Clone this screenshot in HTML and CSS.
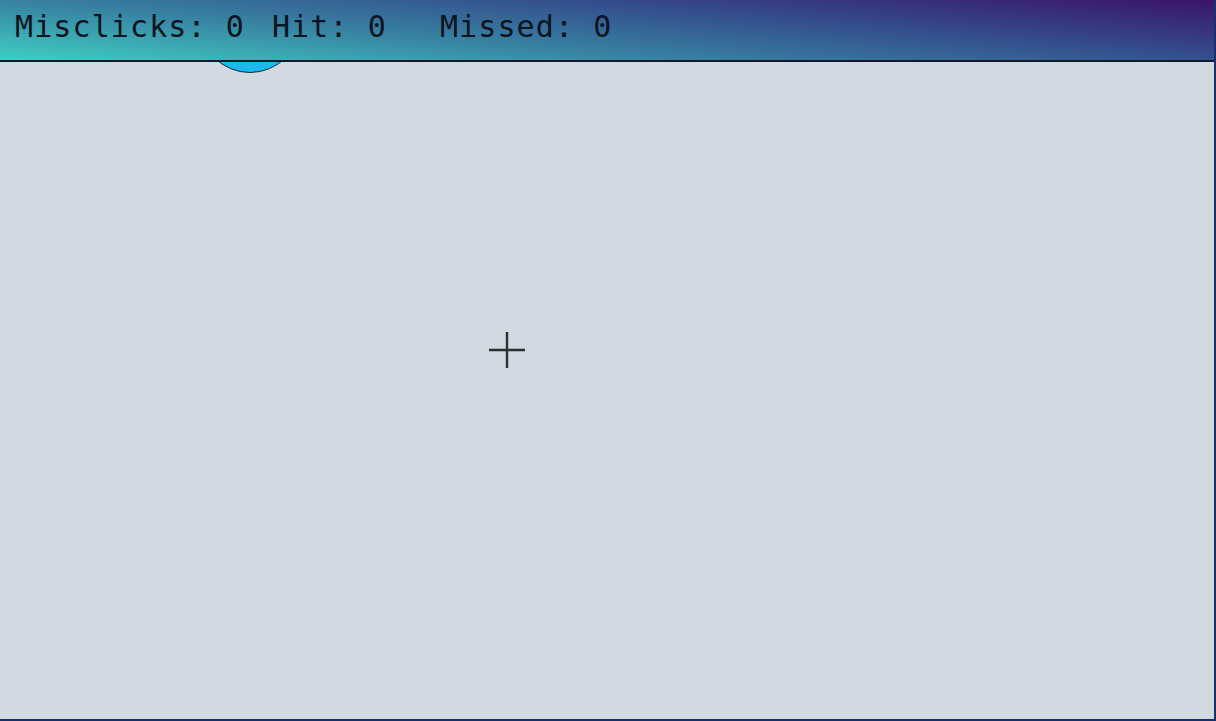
FILE: index.html
```html
<!DOCTYPE html>
<html lang="en">
<head>
<meta charset="utf-8">
<title>Aim Trainer</title>
<link rel="stylesheet" href="styles.css">
</head>
<body>
<div class="app">
  <header class="hud">
    <span class="stat">Misclicks: 0</span>
    <span class="stat stat-hit">Hit: 0</span>
    <span class="stat">Missed: 0</span>
  </header>
  <main class="field">
    <div class="target"></div>
    <svg class="crosshair" width="40" height="40" viewBox="0 0 40 40" aria-hidden="true">
      <path d="M2 20H38M20 2V38" stroke="#2a2e35" stroke-width="2.4" fill="none"/>
    </svg>
  </main>
</div>
</body>
</html>
```

FILE: styles.css
```css
html, body {
  margin: 0;
  padding: 0;
  height: 100%;
}

body {
  background: #d3d9e1;
  overflow: hidden;
}

.app {
  box-sizing: border-box;
  width: 100vw;
  height: 100vh;
  display: flex;
  flex-direction: column;
  border-right: 2px solid #18306a;
  border-bottom: 2px solid #18306a;
}

.hud {
  position: relative;
  z-index: 2;
  flex: 0 0 auto;
  box-sizing: border-box;
  height: 62px;
  border-bottom: 2px solid #0f1b2c;
  background: linear-gradient(5deg, #3fcec2 0%, #3780a1 37%, #344a8b 68%, #3a1468 100%);
  display: flex;
  align-items: flex-start;
  padding: 9px 0 0 15px;
  font-family: "DejaVu Sans Mono", "Liberation Mono", monospace;
  font-size: 30px;
  letter-spacing: 1.1px;
  font-variant-numeric: slashed-zero;
  color: #0b1420;
  white-space: pre;
}

.stat {
  margin-right: 27px;
}

.stat-hit {
  margin-right: 53px;
}

.field {
  position: relative;
  flex: 1 1 auto;
  background: #d3d9e1;
}

.target {
  position: absolute;
  left: 199px;
  top: -91px;
  width: 100px;
  height: 100px;
  border-radius: 50%;
  background: #1bb9ec;
  border: 1px solid #1a2a3a;
}

.crosshair {
  position: absolute;
  left: 487px;
  top: 268px;
}
```
